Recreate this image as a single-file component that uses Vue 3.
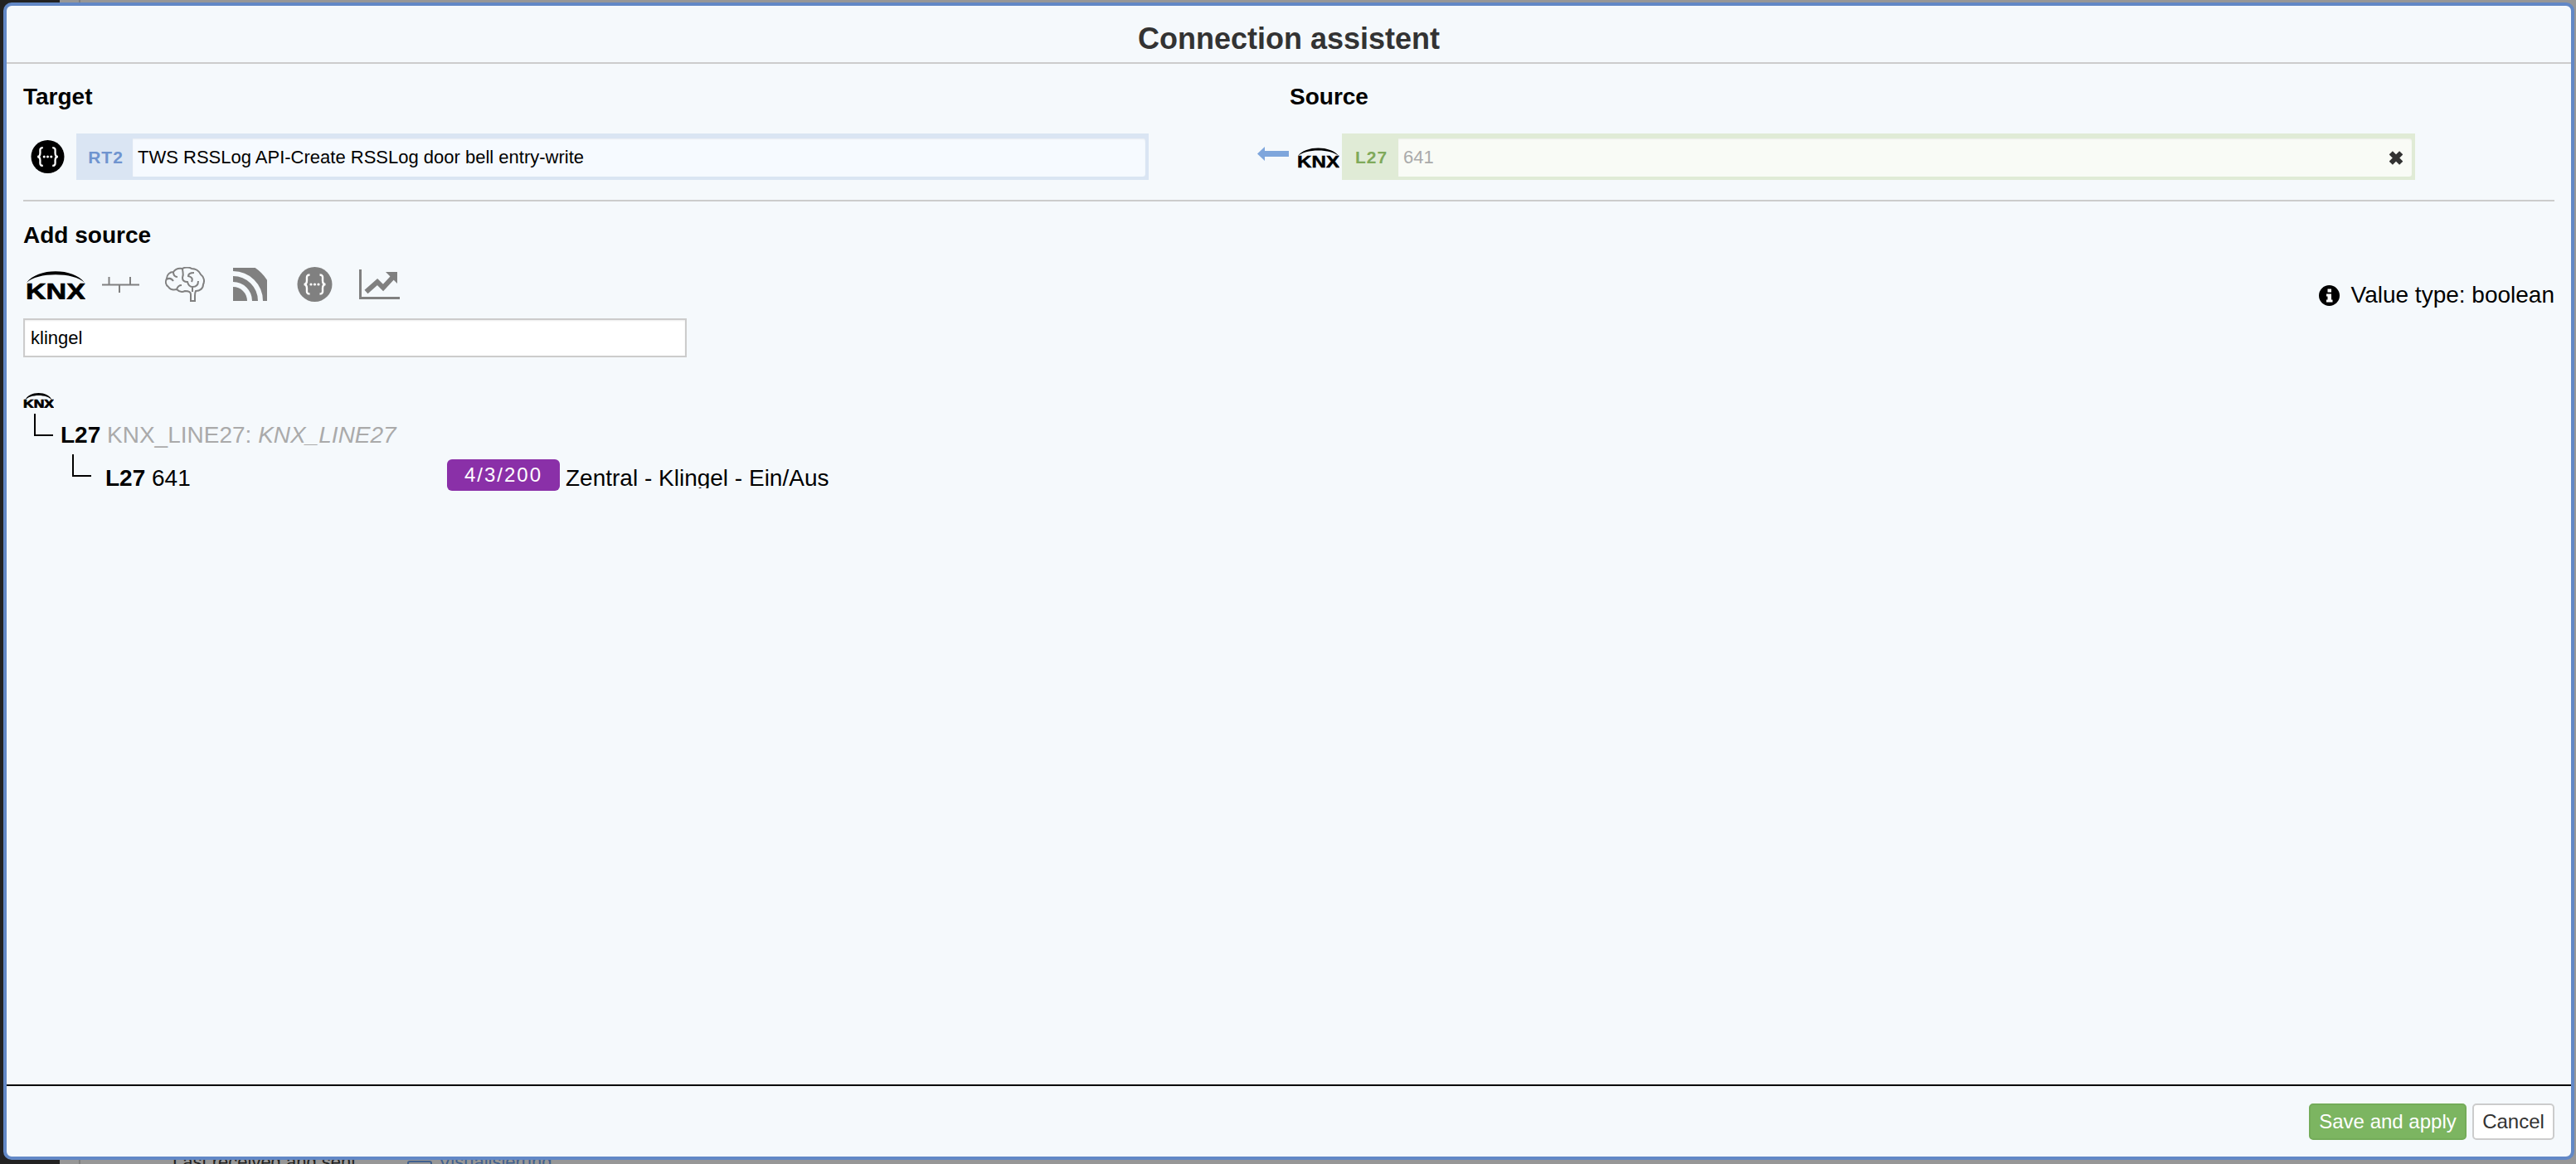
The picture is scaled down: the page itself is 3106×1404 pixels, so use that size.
<script setup>
const braces = {
  left: 'M15 9.5 C10.5 9.5 11.5 13 11.5 16 C11.5 19 10 21 8 21 C10 21 11.5 23 11.5 26 C11.5 29 10.5 32.5 15 32.5',
  right: 'M27 9.5 C31.5 9.5 30.5 13 30.5 16 C30.5 19 32 21 34 21 C32 21 30.5 23 30.5 26 C30.5 29 31.5 32.5 27 32.5'
}
</script>

<template>
  <div class="page">
    <div class="behind">
      <div class="side"></div>
      <div class="strip"></div>
      <span class="behind-text">Last received and sent</span>
      <span class="behind-box"></span>
      <span class="behind-link">Visualisierung</span>
    </div>

    <div class="dialog">
      <header class="head">
        <h1>Connection assistent</h1>
      </header>

      <main class="body">
        <section class="pair">
          <div class="col col-target">
            <h2>Target</h2>
            <div class="row target-row">
              <svg class="api-small" viewBox="0 0 42 42">
                <circle cx="21" cy="21" r="21" fill="#000" />
                <path :d="braces.left" fill="none" stroke="#fff" stroke-width="2.4" />
                <path :d="braces.right" fill="none" stroke="#fff" stroke-width="2.4" />
                <circle cx="16.5" cy="21" r="1.6" fill="#fff" />
                <circle cx="21" cy="21" r="1.6" fill="#fff" />
                <circle cx="25.5" cy="21" r="1.6" fill="#fff" />
              </svg>
              <div class="field field-blue">
                <span class="tag tag-blue">RT2</span>
                <span class="value value-blue">TWS RSSLog API-Create RSSLog door bell entry-write</span>
              </div>
            </div>
          </div>

          <div class="col col-source">
            <h2 class="source-title">Source</h2>
            <div class="row source-row">
              <svg class="arrow" viewBox="0 0 38 17">
                <path d="M0 8.5 L9 0 V5 H38 V12 H9 V17 Z" fill="#7ea6dc" />
              </svg>
              <svg class="knx-mid" viewBox="0 0 72 34">
                <path d="M1 14 C14 -4.5 58 -4.5 71 14 C58 1 14 1 1 14 Z" fill="#000" />
                <text x="0" y="33.5" class="knx-text" font-size="28" textLength="72" lengthAdjust="spacingAndGlyphs">KNX</text>
              </svg>
              <div class="field field-green">
                <span class="tag tag-green">L27</span>
                <span class="value value-green">
                  <span class="muted">641</span>
                  <svg class="close" viewBox="0 0 16 17">
                    <path d="M1.8 2.3 L14.2 14.7 M14.2 2.3 L1.8 14.7" stroke="#333" stroke-width="6" fill="none" />
                  </svg>
                </span>
              </div>
            </div>
          </div>
        </section>

        <hr class="rule" />

        <h2 class="add-title">Add source</h2>

        <section class="add">
          <div class="add-left">
            <div class="icons">
              <svg class="i-knx" viewBox="0 0 72 34">
                <path d="M1 14 C14 -4.5 58 -4.5 71 14 C58 1 14 1 1 14 Z" fill="#000" />
                <text x="0" y="33.5" class="knx-text" font-size="28" textLength="72" lengthAdjust="spacingAndGlyphs">KNX</text>
              </svg>
              <svg class="i-bus" viewBox="0 0 45 19">
                <path d="M0 9.5 H45 M8.5 0 V9.5 M34 0 V9.5 M21 9.5 V19" stroke="#808080" stroke-width="2" fill="none" />
              </svg>
              <svg class="i-brain" viewBox="0 0 48 42">
                <g fill="none" stroke="#808080" stroke-width="2">
                  <path d="M31 41 V33 C31 30 28 29 24 29 C20 31 16 29 14 27 C10 28 6 27 4 24 C1 22 0 18 2 14 C2 9 6 6 10 6 C12 3 16 1 21 2 C24 0 29 0 32 2 C37 2 41 5 43 9 C47 12 48 17 46 21 C46 26 42 29 37 29 C36 31 36 33 36 35 V41 Z" />
                  <path d="M2 15 C5 13 8 14 10 17" />
                  <path d="M10 6 C10 10 12 12 15 12" />
                  <path d="M14 27 C15 24 17 22 20 22" />
                  <path d="M21 2 C21 6 23 8 21 13 C21 16 23 18 27 18 C28 22 30 24 33 24 V30" />
                  <path d="M35 7 C30 7 28 8 28 11 C32 12 34 14 32 18" />
                  <path d="M33 24 C38 24 40 22 40 17" />
                </g>
              </svg>
              <svg class="i-rss" viewBox="0 0 41 40">
                <path d="M0 40 V23 A17 17 0 0 1 17 40 Z" fill="#808080" />
                <circle cx="0" cy="40" r="26.5" fill="none" stroke="#808080" stroke-width="7" />
                <circle cx="0" cy="40" r="42" fill="none" stroke="#808080" stroke-width="12" />
              </svg>
              <svg class="i-api" viewBox="0 0 42 42">
                <circle cx="21" cy="21" r="21" fill="#808080" />
                <path :d="braces.left" fill="none" stroke="#fff" stroke-width="2.4" />
                <path :d="braces.right" fill="none" stroke="#fff" stroke-width="2.4" />
                <circle cx="16.5" cy="21" r="1.6" fill="#fff" />
                <circle cx="21" cy="21" r="1.6" fill="#fff" />
                <circle cx="25.5" cy="21" r="1.6" fill="#fff" />
              </svg>
              <svg class="i-chart" viewBox="0 0 49 36">
                <path d="M1.5 0 V34.5 H49" fill="none" stroke="#808080" stroke-width="3" />
                <path d="M8.5 27 L22 15 L29 22 L41 9" fill="none" stroke="#808080" stroke-width="6" />
                <path d="M32 3 H46 V17 Z" fill="#808080" />
              </svg>
            </div>
            <div class="search">klingel</div>
          </div>

          <div class="info">
            <svg class="i-info" viewBox="0 0 25 25">
              <circle cx="12.5" cy="12.5" r="12.5" fill="#000" />
              <rect x="10.5" y="4.5" width="4.5" height="4" fill="#fff" />
              <path d="M9 10.5 H15 V17.5 H16.5 V20.5 H9 V17.5 H10.5 V13.5 H9 Z" fill="#fff" />
            </svg>
            <span>Value type: boolean</span>
          </div>
        </section>

        <section class="tree">
          <svg class="knx-small" viewBox="0 0 37 18">
            <path d="M2 9 C7 -3 30 -3 35 9 C29 1 8 1 2 9 Z" fill="#000" />
            <text x="0" y="17.5" class="knx-text" font-size="14" textLength="37" lengthAdjust="spacingAndGlyphs">KNX</text>
          </svg>
          <div class="tree-row first">
            <span class="elbow elbow-1"></span>
            <span class="tree-text">
              <b>L27</b> <span class="grey">KNX_LINE27: <i>KNX_LINE27</i></span>
            </span>
          </div>
          <div class="tree-row second">
            <span class="elbow elbow-2"></span>
            <span class="tree-text clip name"><b>L27</b> 641</span>
            <span class="badge">4/3/200</span>
            <span class="tree-text clip desc">Zentral - Klingel - Ein/Aus</span>
          </div>
        </section>
      </main>

      <footer class="foot">
        <button class="btn btn-save" type="button">Save and apply</button>
        <button class="btn btn-cancel" type="button">Cancel</button>
      </footer>
    </div>
  </div>
</template>

<style scoped>
.page {
  position: relative;
  width: 3106px;
  height: 1404px;
  overflow: hidden;
  background: #979797;
  font-family: "Liberation Sans", Arial, sans-serif;
  color: #000;
}
.behind { position: absolute; inset: 0; }
.side { position: absolute; left: 0; top: 0; bottom: 0; width: 72px; background: #222; }
.strip { position: absolute; left: 95px; top: 0; bottom: 0; width: 2px; background: #7f7f7f; }
.behind-text { position: absolute; left: 208px; top: 1388px; font-size: 22px; line-height: 28px; color: #222; white-space: nowrap; }
.behind-box { position: absolute; left: 491px; top: 1400px; width: 26px; height: 20px; border: 2px solid #40608f; border-radius: 3px; }
.behind-link { position: absolute; left: 529px; top: 1388px; font-size: 22px; line-height: 28px; color: #40608f; white-space: nowrap; }

.dialog {
  position: absolute;
  left: 4px;
  top: 3px;
  width: 3100px;
  height: 1396px;
  box-sizing: border-box;
  display: flex;
  flex-direction: column;
  background: #f5f9fc;
  border: 4px solid #6288c6;
  border-radius: 10px;
}

.head {
  border-bottom: 2px solid #ccc;
  display: flex;
  justify-content: center;
  padding-top: 20px;
  height: 48px;
}
h1 {
  margin: 0;
  font-size: 36px;
  line-height: 40px;
  font-weight: 700;
  color: #333;
}
h2 {
  margin: 0;
  font-size: 28px;
  line-height: 32px;
  font-weight: 700;
}

.body {
  flex: 1;
  padding: 24px 20px 0;
  min-height: 0;
}

.pair { display: flex; }
.col-target { width: 1488px; }
.col-source { flex: 1; }
.source-title { padding-left: 39px; }
.row { display: flex; align-items: center; margin-top: 28px; height: 56px; }
.target-row { padding-left: 9px; }
.api-small { width: 41px; height: 40px; margin-right: 14px; }
.arrow { width: 38px; height: 17px; margin-right: 10px; margin-top: -8px; }
.knx-mid { width: 51px; height: 25px; margin-right: 3px; margin-top: 2px; }
.knx-text { font-family: "Liberation Sans", Arial, sans-serif; font-weight: 700; fill: #000; stroke: #000; stroke-width: .7px; }

.field {
  display: flex;
  box-sizing: border-box;
  width: 1293px;
  height: 56px;
  padding: 6px 4px 4px 0;
}
.field-blue { background: #dae5f3; }
.field-green { background: #e0ebd6; width: 1294px; }
.tag {
  box-sizing: border-box;
  width: 68px;
  flex: none;
  padding-left: 3px;
  display: flex;
  align-items: center;
  justify-content: center;
  font-size: 21px;
  font-weight: 700;
  letter-spacing: 1px;
}
.tag-blue { color: #6f94cf; }
.tag-green { color: #7fa95a; }
.value {
  flex: 1;
  display: flex;
  align-items: center;
  justify-content: space-between;
  padding: 0 11px 0 6px;
  border-radius: 0 3px 3px 0;
  font-size: 22px;
  box-shadow: inset 0 1px 2px rgba(0, 0, 0, .06);
}
.value-blue { background: #f6faff; }
.value-green { background: #f9fbf6; }
.muted { color: #aaa; }
.close { width: 16px; height: 17px; }

.rule {
  height: 2px;
  margin: 24px 0 0;
  border: 0;
  background: #ccc;
}
.add-title { margin-top: 25px; }

.add {
  display: flex;
  justify-content: space-between;
  align-items: flex-start;
  margin-top: 18px;
}
.icons {
  display: flex;
  align-items: center;
  height: 50px;
  padding-left: 3px;
}
.i-knx { width: 72px; height: 34px; margin-top: 2px; }
.i-bus { width: 45px; height: 19px; margin-left: 20px; }
.i-brain { width: 48px; height: 42px; margin-left: 31px; }
.i-rss { width: 41px; height: 40px; margin-left: 34px; }
.i-api { width: 43px; height: 42px; margin-left: 36px; }
.i-chart { width: 49px; height: 36px; margin-left: 32px; }

.search {
  box-sizing: border-box;
  width: 800px;
  height: 47px;
  margin-top: 16px;
  padding: 1px 0 0 7px;
  display: flex;
  align-items: center;
  background: #fff;
  border: 2px solid #ccc;
  font-size: 22px;
  box-shadow: inset 0 1px 2px rgba(0, 0, 0, .08);
}

.info {
  display: flex;
  align-items: center;
  gap: 14px;
  margin-top: 22px;
  font-size: 28px;
  line-height: 32px;
}
.i-info { width: 25px; height: 25px; }

.tree { margin-top: 43px; }
.knx-small { display: block; width: 37px; height: 18px; }
.tree-row { display: flex; align-items: flex-start; }
.tree-text {
  font-size: 28px;
  line-height: 34px;
  white-space: pre;
}
.grey { color: #aaa; }
.elbow {
  flex: none;
  box-sizing: border-box;
  height: 27px;
  border-left: 2px solid #000;
  border-bottom: 2px solid #000;
}
.first { height: 50px; margin-top: 6px; }
.first .tree-text { margin-top: 10px; margin-left: 9px; }
.elbow-1 { width: 23px; margin-left: 13px; margin-top: 1px; }
.second { height: 44px; }
.elbow-2 { width: 23px; margin-left: 59px; }
.clip { height: 29px; overflow: hidden; margin-top: 12px; }
.name { width: 412px; margin-left: 17px; }
.badge {
  flex: none;
  box-sizing: border-box;
  width: 136px;
  height: 38px;
  margin-top: 6px;
  display: flex;
  align-items: center;
  justify-content: center;
  background: #8a30a8;
  border-radius: 6px;
  color: #fff;
  font-size: 24px;
  letter-spacing: 2px;
}
.desc { margin-left: 7px; }

.foot {
  height: 85px;
  border-top: 2px solid #000;
  display: flex;
  justify-content: flex-end;
  align-items: flex-start;
  gap: 7px;
  padding-right: 20px;
}
.btn {
  margin-top: 21px;
  height: 44px;
  padding: 0;
  border-radius: 5px;
  font-family: inherit;
  font-size: 24px;
}
.btn-save {
  width: 190px;
  background: #7cb561;
  border: 2px solid #74ac59;
  color: #fff;
}
.btn-cancel {
  width: 99px;
  background: #fff;
  border: 2px solid #ccc;
  color: #333;
}
</style>

<style>
html, body { margin: 0; overflow: hidden; }
</style>
